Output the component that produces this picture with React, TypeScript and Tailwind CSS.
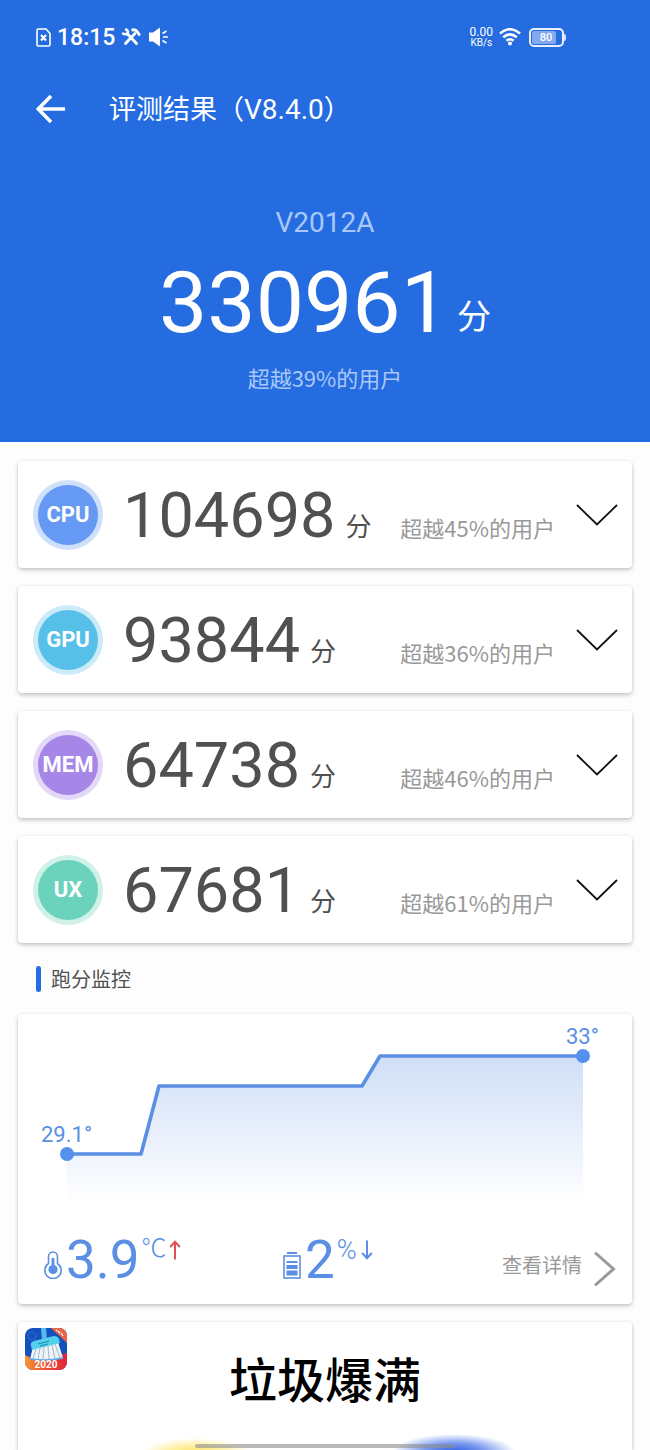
import { useState } from 'react';

// Types
type ScoreTypes = {
  label: string;
  score: string;
  percent: string;
  ring: string;
  fill: string;
};

const scores: ScoreTypes[] = [
  { label: 'CPU', score: '104698', percent: '45%', ring: 'bg-[#cfe0fa]', fill: 'bg-[#6599f4]' },
  { label: 'GPU', score: '93844', percent: '36%', ring: 'bg-[#cbebf9]', fill: 'bg-[#57c0e8]' },
  { label: 'MEM', score: '64738', percent: '46%', ring: 'bg-[#e3d8f8]', fill: 'bg-[#a687e8]' },
  { label: 'UX', score: '67681', percent: '61%', ring: 'bg-[#d0f1e8]', fill: 'bg-[#6bd3bb]' },
];

const cardClass = 'rounded-[4px] bg-white shadow-[0_2px_4px_rgba(0,0,0,0.22),0_0_2px_rgba(0,0,0,0.08)]';
const digitFont = "font-['Roboto','Noto_Sans_CJK_SC',sans-serif]";

// ---------------------- Status bar ----------------------
function StatusBar() {
  return (
    <div className="flex h-8 items-center justify-between pr-[84px] pl-9 font-['Roboto',sans-serif]">
      <div className="flex items-center">
        <svg width="15" height="19" viewBox="0 0 15 19" fill="none" stroke="currentColor" strokeWidth="1.6">
          <path d="M1 2.5Q1 1 2.5 1H10L14 5.5V16.5Q14 18 12.5 18H2.5Q1 18 1 16.5Z" />
          <path d="M5 7l5 5.5M10 7l-5 5.5" strokeWidth="2" />
        </svg>
        <span className="ml-1.5 pt-0.5 text-[23px] leading-8 font-medium">18:15</span>
        <svg className="ml-1.5" width="20" height="18" viewBox="0 0 20 18" fill="none" stroke="currentColor">
          <path d="M6 5.5l9.5 10" strokeWidth="2.8" strokeLinecap="round" />
          <path d="M14 5.5L4.5 15.5" strokeWidth="2.8" strokeLinecap="round" />
          <path d="M4 1.5Q7.500 1.500 7 5.500Q4.500 7.500 1.200 5" strokeWidth="2.4" />
          <path d="M10.5 2.2Q14.5 .8 16.5 4L18.8 7.500" strokeWidth="2.8" />
        </svg>
        <svg className="ml-2" width="20" height="20" viewBox="0 0 20 20" fill="currentColor">
          <path d="M0 5.500H4L11 .500V19.500L4 14.500H0Z" />
          <path d="M13.5 6.5l4-2.5M14 10h5M13.5 13.5l4 2.5" fill="none" stroke="currentColor" strokeWidth="1.6" />
        </svg>
      </div>
      <div className="flex items-center">
        <div className="flex flex-col items-center">
          <span className="text-[12px] leading-[11px]">0.00</span>
          <span className="text-[10px] leading-[10px]">KB/s</span>
        </div>
        <svg className="ml-1.5" width="22" height="18" viewBox="0 0 22 18" fill="none" stroke="currentColor" strokeWidth="2.6">
          <path d="M1 5.500Q11-3 21 5.500" />
          <path d="M4.200 9.200Q11 3.500 17.800 9.200" />
          <path d="M7.400 12.700Q11 9.800 14.600 12.700" />
          <circle cx="11" cy="15.500" r="2" fill="currentColor" stroke="none" />
        </svg>
        <div className="ml-2 flex items-center">
          <div className="flex h-[19px] w-[35px] rounded-[5px] border-2 border-white/90 p-px">
            <span className="w-[24px] rounded-[2px] bg-[#82a9ef] pl-1 text-center text-[11px] leading-[13px] font-medium">
              80
            </span>
          </div>
          <span className="h-[7px] w-0.5 rounded-r bg-white/80" />
        </div>
      </div>
    </div>
  );
}

// ---------------------- Header ----------------------
function Header() {
  return (
    <header className="bg-[#256ce0] pt-[21px] pb-[49px] font-['Noto_Sans_CJK_SC',sans-serif] text-white">
      <StatusBar />
      <div className="mt-[26px] flex h-[60px] items-center pl-9">
        <button aria-label="返回">
          <svg width="30" height="28" viewBox="0 0 30 28" fill="none" stroke="currentColor" strokeWidth="3.6">
            <path d="M29 14H2.500M15 1L2.200 14L15 27" />
          </svg>
        </button>
        <h1 className="ml-[43px] text-[27px] leading-[40px]">
          评测结果（<span className="font-['Roboto',sans-serif] text-[28px]">V8.4.0</span>）
        </h1>
      </div>
      <div className="mt-16 text-center">
        <p className="font-['Roboto',sans-serif] text-[28px] leading-10 text-[#a9c8f8]">V2012A</p>
        <p className={`${digitFont} mt-[18px] flex items-end justify-center text-[86px] leading-[84px]`}>
          330961<span className="mb-2 ml-2 text-[34px] leading-10">分</span>
        </p>
        <p className="mt-4 text-[22px] leading-8 text-[#a9c8f8]">超越39%的用户</p>
      </div>
    </header>
  );
}

// ---------------------- Score card ----------------------
function ScoreCard(props: ScoreTypes) {
  const [open, setOpen] = useState<boolean>(false);

  return (
    <li className={`${cardClass} flex h-[107px] items-center pr-3.5 pl-[15px]`}>
      <div className={`${props.ring} grid size-[70px] shrink-0 place-content-center rounded-full`}>
        <div
          className={`${props.fill} grid size-[60px] place-content-center rounded-full font-['Roboto',sans-serif] text-[22px] font-bold text-white`}
        >
          {props.label}
        </div>
      </div>
      <div className="ml-5 flex flex-1 items-end pt-0.5 text-[#505050]">
        <span className={`${digitFont} text-[63px] leading-[72px]`}>{props.score}</span>
        <span className="mb-[11px] ml-2.5 text-[26px] leading-8">分</span>
        <span className="mb-[9px] ml-auto text-[22px] leading-8 text-[#999]">超越{props.percent}的用户</span>
      </div>
      <button className="ml-[21px]" aria-label={props.label} aria-expanded={open} onClick={() => setOpen(!open)}>
        <svg width="42" height="22" viewBox="0 0 42 22" fill="none" stroke="#111" strokeWidth="1.8">
          <path d="M1 1L21 20.500L41 1" />
        </svg>
      </button>
    </li>
  );
}

// ---------------------- Monitor ----------------------
function Chart() {
  return (
    <svg className="block w-full" viewBox="0 0 614 200" role="img" aria-label="跑分监控">
      <defs>
        <linearGradient id="area" x1="0" y1="0" x2="0" y2="1">
          <stop offset="0" stopColor="#d0dff7" />
          <stop offset="0.4" stopColor="#e2ebfa" />
          <stop offset="1" stopColor="#ffffff" />
        </linearGradient>
      </defs>
      <path d="M49 140H123L141 72H344L362 42H565V190H49Z" fill="url(#area)" />
      <path d="M49 140H123L141 72H344L362 42H565" fill="none" stroke="#5a8fe4" strokeWidth="3.6" strokeLinejoin="round" />
      <circle cx="49" cy="140" r="7" fill="#5590ec" />
      <circle cx="565" cy="42" r="7" fill="#5590ec" />
      <g className={digitFont} fontSize="22" fill="#5a8fe4">
        <text x="23" y="128">29.1°</text>
        <text x="548" y="30">33°</text>
      </g>
    </svg>
  );
}

function Monitor() {
  return (
    <section className={`${cardClass} pb-3.5`}>
      <Chart />
      <div className={`${digitFont} mt-4 flex h-[60px] pr-4 pl-[26px] text-[#5a8fe4]`}>
        <div className="flex w-[239px]">
          <svg className="mt-[21px]" width="18" height="28" viewBox="0 0 18 28" fill="none" stroke="currentColor">
            <path d="M4.5 12.5V5.5A4.5 4.5 0 0 1 13.5 5.5V12.5A8.2 8.2 0 1 1 4.5 12.5Z" strokeWidth="1.6" />
            <path d="M9 7V18" strokeWidth="2.8" />
            <circle cx="9" cy="18.5" r="4.6" fill="currentColor" stroke="none" />
          </svg>
          <span className="ml-1 text-[53px] leading-[60px]">3.9</span>
          <span className="ml-0.5 text-[25px] leading-[38px] font-light">℃</span>
          <svg className="mt-2.5 ml-0.5" width="12" height="20" viewBox="0 0 12 20" fill="none" stroke="#e05252" strokeWidth="2">
            <path d="M6 19.500V2M1.200 7L6 1.800L10.800 7" />
          </svg>
        </div>
        <div className="flex">
          <svg className="mt-[22px]" width="18" height="27" viewBox="0 0 18 27" fill="currentColor">
            <rect x="4" y="0" width="10" height="2" />
            <rect x="1" y="4" width="16" height="22" fill="none" stroke="currentColor" strokeWidth="1.6" />
            <rect x="3.5" y="9" width="11" height="2" />
            <rect x="3.5" y="13" width="11" height="4" />
            <rect x="3.5" y="18.5" width="11" height="5" />
          </svg>
          <span className="ml-1 text-[53px] leading-[60px]">2</span>
          <span className="ml-0.5 text-[27px] leading-[40px] font-light">%</span>
          <svg className="mt-2.5 ml-1" width="12" height="20" viewBox="0 0 12 20" fill="none" stroke="currentColor" strokeWidth="2">
            <path d="M6 .5V18M1.200 13L6 18.200L10.800 13" />
          </svg>
        </div>
        <a href="#detail" className="mt-[18px] ml-auto flex items-center gap-3 text-xl text-[#999]">
          <span className="mb-1.5">查看详情</span>
          <svg width="22" height="34" viewBox="0 0 22 34" fill="none" stroke="currentColor" strokeWidth="3">
            <path d="M2 1.500L19.500 17L2 32.500" strokeLinecap="round" />
          </svg>
        </a>
      </div>
    </section>
  );
}

// ---------------------- Promo ----------------------
function PromoIcon() {
  return (
    <svg className="size-[42px]" viewBox="0 0 42 42">
      <defs>
        <clipPath id="tile">
          <rect width="42" height="42" rx="8" />
        </clipPath>
        <linearGradient id="band" x1="0" y1="0" x2="1" y2="0">
          <stop offset="0" stopColor="#f79432" />
          <stop offset="0.5" stopColor="#ee5036" />
          <stop offset="1" stopColor="#e32638" />
        </linearGradient>
      </defs>
      <g clipPath="url(#tile)">
        <rect width="42" height="42" fill="#1551bd" />
        <circle cx="7" cy="8" r="4" fill="none" stroke="#4a86dc" strokeWidth=".8" strokeDasharray="2 1" />
        <path d="M0 27L8 31H42V42H0Z" fill="url(#band)" />
        <path d="M34 27L42 25V33H34Z" fill="#e32638" />
        <path d="M26 0H42V15Z" fill="#ee6248" />
        <path d="M33 3l2 2M36 5l2 3M31 2l1 1" stroke="#fff" strokeWidth="1.2" />
        <path d="M16 0H21L22 12H17Z" fill="#57b9ef" />
        <path d="M8 19L33 14L38 30Q22 34 5 31Z" fill="#eef3f8" />
        <path d="M11 21L8 31M15 20L13 31M19 19L18 31M23 18L24 31M27 17L30 31M30 16L35 30" stroke="#9eafc0" strokeWidth=".9" />
        <path d="M5 30Q21 33 38 29V31Q22 34 5 32Z" fill="#5da9e5" />
        <path d="M6 18Q5 14 9 13L29 8Q33 8 34 11L35 15L7 22Z" fill="#54d1ec" />
        <path d="M13 16l11-3M15 18l8-2" stroke="#218eb3" strokeWidth="1.2" />
        <text x="21" y="40" textAnchor="middle" fontSize="10" fontWeight="bold" fill="#fff" fontFamily="Roboto, sans-serif">
          2020
        </text>
      </g>
    </svg>
  );
}

function Promo() {
  return (
    <section className={`${cardClass} relative flex-1 overflow-hidden rounded-b-none pt-[27px] text-center`}>
      <div className="absolute top-1.5 left-[7px]">
        <PromoIcon />
      </div>
      <h2 className="text-[48px] leading-[56px] font-medium text-black">垃圾爆满</h2>
      <div className="absolute -bottom-5 left-[20%] h-8 w-[18%] bg-[radial-gradient(closest-side,#ffe25a,#fff0a0_50%,transparent)]" />
      <div className="absolute -bottom-5 left-[61%] h-9 w-[20%] bg-[radial-gradient(closest-side,#2c5ce0,#7d9cf0_50%,transparent)]" />
    </section>
  );
}

function App() {
  return (
    <div className="relative flex min-h-screen flex-col bg-[#fdfdfd] font-['Noto_Sans_CJK_SC',sans-serif]">
      <Header />
      <main className="flex flex-1 flex-col px-[18px] pt-[19px]">
        <ul className="flex flex-col gap-[18px]">
          {scores.map((item) => (
            <ScoreCard key={item.label} {...item} />
          ))}
        </ul>
        <div className="flex h-[71px] items-center gap-2.5 pl-[18px]">
          <span className="h-[26px] w-[5px] rounded-full bg-[#256ce0]" />
          <h2 className="text-xl text-[#505050]">跑分监控</h2>
        </div>
        <Monitor />
        <div className="mt-[18px] flex flex-1 flex-col">
          <Promo />
        </div>
      </main>
      <div className="absolute bottom-0.5 left-[30%] h-1 w-[40%] rounded-full bg-[#8c8c8c]/60" />
    </div>
  );
}

export default App;
